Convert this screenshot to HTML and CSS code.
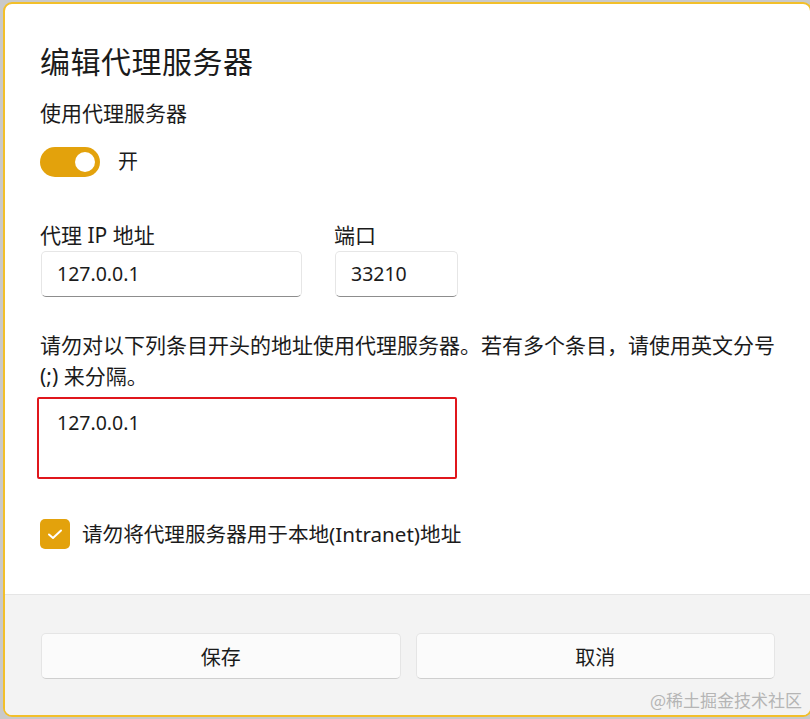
FILE: index.html
```html
<!DOCTYPE html>
<html lang="zh-CN">
<head>
    <meta charset="UTF-8">
    <meta name="viewport" content="width=device-width, initial-scale=1.0">
    <title>编辑代理服务器</title>
    <link rel="stylesheet" href="styles.css">
</head>
<body>
    <div class="dialog">
        <div class="content">
            <h1 class="title">编辑代理服务器</h1>

            <div class="label">使用代理服务器</div>
            <div class="toggle-row">
                <span class="toggle"><span class="knob"></span></span>
                <span class="toggle-text">开</span>
            </div>

            <div class="fields">
                <div class="field field-ip">
                    <div class="label">代理 IP 地址</div>
                    <div class="input">127.0.0.1</div>
                </div>
                <div class="field field-port">
                    <div class="label">端口</div>
                    <div class="input">33210</div>
                </div>
            </div>

            <p class="desc">请勿对以下列条目开头的地址使用代理服务器。若有多个条目，请使用英文分号 (;) 来分隔。</p>
            <div class="textarea">127.0.0.1</div>

            <div class="check-row">
                <span class="checkbox">
                    <svg width="20" height="20" viewBox="0 0 20 20">
                        <path d="M4 10.5 L8 14 L16 6.5" fill="none" stroke="#fff" stroke-width="2" stroke-linecap="round" stroke-linejoin="round"/>
                    </svg>
                </span>
                <span class="check-text">请勿将代理服务器用于本地(Intranet)地址</span>
            </div>
        </div>

        <div class="footer">
            <button class="btn">保存</button>
            <button class="btn">取消</button>
        </div>

        <div class="watermark">@稀土掘金技术社区</div>
    </div>
</body>
</html>
```

FILE: styles.css
```css
* {
    margin: 0;
    padding: 0;
    box-sizing: border-box;
}

body {
    font-family: "Noto Sans", "Noto Sans CJK SC", sans-serif;
    background-color: #c9c9c9;
    width: 810px;
    height: 719px;
    overflow: hidden;
    padding: 2px 0 0 3px;
}

.dialog {
    position: relative;
    width: 809px;
    height: 715px;
    background-color: #ffffff;
    border: 2px solid #f2bf2a;
    border-radius: 9px;
    display: flex;
    flex-direction: column;
    overflow: hidden;
    color: #1b1b1b;
}

.content {
    flex: 1;
    padding: 36px 35px 0 35px;
}

.title {
    font-family: "Noto Sans CJK SC", sans-serif;
    font-size: 30px;
    font-weight: 400;
    line-height: 40px;
    letter-spacing: 0.5px;
}

.label {
    font-family: "Noto Sans", "Noto Sans CJK SC", sans-serif;
    font-size: 21px;
    line-height: 30px;
    margin-top: 18px;
}

.toggle-row {
    display: flex;
    align-items: center;
    gap: 18px;
    margin-top: 19px;
    height: 30px;
}

.toggle {
    display: flex;
    align-items: center;
    justify-content: flex-end;
    width: 60px;
    height: 30px;
    border-radius: 15px;
    background-color: #e3a20c;
    padding-right: 5px;
}

.knob {
    width: 20px;
    height: 20px;
    border-radius: 50%;
    background-color: #ffffff;
}

.toggle-text {
    font-size: 20px;
    line-height: 30px;
}

.fields {
    display: flex;
    gap: 32px;
    margin-top: 25px;
}

.field .label {
    margin-top: 18px;
    margin-bottom: 1px;
}

.field-ip {
    width: 262px;
}

.field-port {
    width: 124px;
}

.input {
    height: 46px;
    margin-left: 1px;
    border: 1px solid #e6e6e6;
    border-bottom: 1.5px solid #8d8d8d;
    border-radius: 5px;
    background-color: #ffffff;
    font-size: 19.5px;
    line-height: 44px;
    padding-left: 15px;
}

.desc {
    font-size: 21px;
    line-height: 31px;
    margin-top: 33px;
    margin-right: -12px;
}

.textarea {
    width: 420px;
    height: 82px;
    margin-top: 5px;
    margin-left: -3px;
    border: 2px solid #e0161c;
    border-radius: 2px;
    font-size: 19.5px;
    line-height: 30px;
    padding: 9px 0 0 18px;
}

.check-row {
    display: flex;
    align-items: center;
    gap: 12px;
    margin-top: 40px;
}

.checkbox {
    display: flex;
    align-items: center;
    justify-content: center;
    width: 30px;
    height: 30px;
    border-radius: 5px;
    background-color: #e3a20c;
}

.check-text {
    font-size: 20.6px;
    line-height: 30px;
}

.footer {
    height: 121px;
    background-color: #f3f3f3;
    border-top: 1px solid #e5e5e5;
    display: flex;
    gap: 15px;
    padding: 38px 35px 0 36px;
}

.btn {
    flex: 1;
    height: 46px;
    background-color: #fbfbfb;
    border: 1px solid #e5e5e5;
    border-bottom: 1.5px solid #cfcfcf;
    border-radius: 5px;
    font-family: "Noto Sans CJK SC", sans-serif;
    font-size: 20px;
    color: #1b1b1b;
}

.watermark {
    position: absolute;
    right: 8px;
    bottom: 3px;
    font-family: "Noto Sans CJK SC", sans-serif;
    font-size: 17px;
    color: #b5b5b5;
}
```
